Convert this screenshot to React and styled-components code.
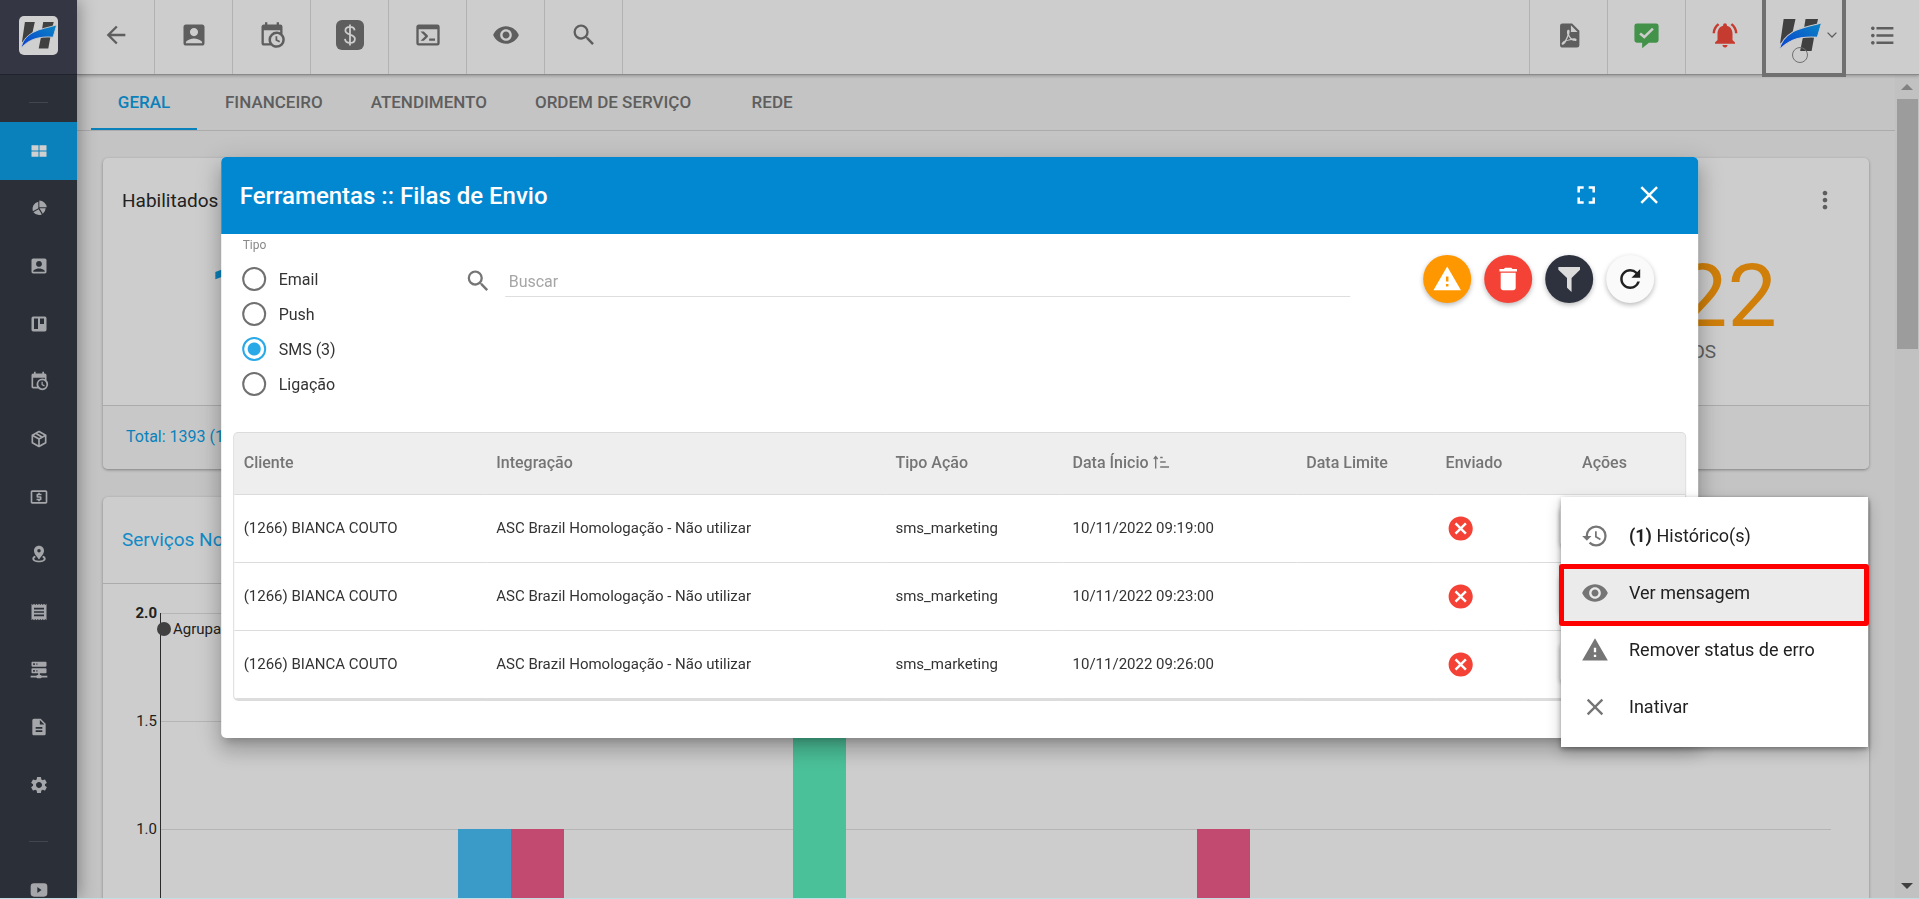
import React from 'react';
import styled, { createGlobalStyle } from 'styled-components';
import {
  MdAccountBox,
  MdArrowBack,
  MdCancel,
  MdClose,
  MdDelete,
  MdDescription,
  MdFormatListBulleted,
  MdFullscreen,
  MdHistory,
  MdLocalAtm,
  MdMoreVert,
  MdNotificationsActive,
  MdReceipt,
  MdRefresh,
  MdSearch,
  MdSettings,
  MdVisibility,
  MdWarning,
} from 'react-icons/md';

const GlobalStyle = createGlobalStyle`
  * {
    box-sizing: border-box;
  }

  html, body, #root {
    height: 100%;
  }

  body {
    margin: 0;
    overflow: hidden;
    background: #c4c4c4;
    color: #212121;
    font-family: Roboto, sans-serif;
    font-size: 16px;
  }

  button, input {
    font: inherit;
    color: inherit;
  }

  button {
    border: 0;
    padding: 0;
    background: none;
    cursor: pointer;
  }

  svg {
    display: block;
    flex: none;
  }
`;

/* ---------- icons ---------- */

const Glyph = ({ d, size = 28 }) => (
  <svg width={size} height={size} viewBox="0 0 24 24" fill="currentColor" fillRule="evenodd">
    <path d={d} />
  </svg>
);

const paths = {
  calendar:
    'M15,13H16.5V15.82L18.94,17.23L18.19,18.53L15,16.69V13M19,8H5V19H9.67C9.24,18.09 9,17.07 9,16A7,7 0 0,1 16,9C17.07,9 18.09,9.24 19,9.67V8M5,21C3.89,21 3,20.1 3,19V5C3,3.89 3.89,3 5,3H6V1H8V3H16V1H18V3H19A2,2 0 0,1 21,5V11.1C22.24,12.36 23,14.09 23,16A7,7 0 0,1 16,23C14.09,23 12.36,22.24 11.1,21H5M16,11.15A4.85,4.85 0 0,0 11.15,16C11.15,18.68 13.32,20.85 16,20.85A4.85,4.85 0 0,0 20.85,16C20.85,13.32 18.68,11.15 16,11.15Z',
  console:
    'M20,19V7H4V19H20M20,3A2,2 0 0,1 22,5V19A2,2 0 0,1 20,21H4A2,2 0 0,1 2,19V5C2,3.89 2.9,3 4,3H20M13,17V15H18V17H13M9.58,13L5.57,9H8.4L11.7,12.3C12.09,12.69 12.09,13.33 11.7,13.72L8.42,17H5.59L9.58,13Z',
  pdf:
    'M14,9H19.5L14,3.5V9M7,2H15L21,8V20A2,2 0 0,1 19,22H7C5.89,22 5,21.1 5,20V4A2,2 0 0,1 7,2M11.93,12.44C12.34,13.34 12.86,14.08 13.46,14.59L13.87,14.91C13,15.07 11.8,15.35 10.53,15.84L10.42,15.88L10.92,14.84C11.37,13.97 11.7,13.18 11.93,12.44M18.41,16.25C18.59,16.07 18.68,15.84 18.69,15.59C18.72,15.39 18.67,15.2 18.57,15.04C18.28,14.57 17.53,14.35 16.29,14.35L15,14.42L14.13,13.84C13.5,13.32 12.93,12.41 12.53,11.28L12.57,11.14C12.9,9.81 13.21,8.2 12.55,7.54C12.39,7.38 12.17,7.3 11.94,7.3H11.7C11.33,7.3 11,7.69 10.91,8.07C10.54,9.4 10.76,10.13 11.13,11.34V11.35C10.88,12.23 10.56,13.25 10.05,14.28L9.09,16.08L8.2,16.57C7,17.32 6.43,18.16 6.32,18.69C6.28,18.88 6.3,19.05 6.37,19.23L6.4,19.28L6.88,19.59L7.32,19.7C8.13,19.7 9.05,18.75 10.29,16.63L10.47,16.56C11.5,16.23 12.78,16 14.5,15.81C15.53,16.32 16.74,16.55 17.5,16.55C17.94,16.55 18.24,16.44 18.41,16.25Z',
  dashboard: 'M3,5H11.4V11.4H3ZM12.6,5H21V11.4H12.6ZM3,12.6H11.4V19H3ZM12.6,12.6H21V19H12.6Z',
  pie:
    'M11.2,4.4V12.2L4.6,16A9,9 0 0,1 11.2,4.4M12.4,3A9.2,9.2 0 0,1 21.3,11H12.4ZM12.6,12.3H20A9,9 0 0,1 16.6,19ZM11.6,13.4L15.4,19.8A9,9 0 0,1 5.3,17Z',
  board:
    'M5,3H19A2,2 0 0,1 21,5V19A2,2 0 0,1 19,21H5A2,2 0 0,1 3,19V5A2,2 0 0,1 5,3M6,5.5V18H10.8V5.5ZM13.2,5.5V12H18V5.5Z',
  box:
    'M21,16.5C21,16.88 20.79,17.21 20.47,17.38L12.57,21.82C12.41,21.94 12.21,22 12,22C11.79,22 11.59,21.94 11.43,21.82L3.53,17.38C3.21,17.21 3,16.88 3,16.5V7.5C3,7.12 3.21,6.79 3.53,6.62L11.43,2.18C11.59,2.06 11.79,2 12,2C12.21,2 12.41,2.06 12.57,2.18L20.47,6.62C20.79,6.79 21,7.12 21,7.5V16.5M12,4.15L10.11,5.22L16,8.61L17.96,7.5L12,4.15M6.04,7.5L12,10.85L13.96,9.75L8.08,6.35L6.04,7.5M5,15.91L11,19.29V12.58L5,9.21V15.91M19,15.91V9.21L13,12.58V19.29L19,15.91Z',
  pin:
    'M12,2C15.6,2 18,4.6 18,8C18,12 14.5,15 12,18.5C9.5,15 6,12 6,8C6,4.6 8.4,2 12,2M12,5.9A2.1,2.1 0 1,0 12,10.1A2.1,2.1 0 1,0 12,5.9M7,14.2L8.2,15.8C7,16.3 6.2,17 6.2,17.8C6.2,19.2 8.6,20.2 12,20.2C15.4,20.2 17.8,19.2 17.8,17.8C17.8,17 17,16.3 15.8,15.8L17,14.2C19,15 20,16.3 20,17.8C20,20.3 16.6,22 12,22C7.4,22 4,20.3 4,17.8C4,16.3 5,15 7,14.2Z',
  server:
    'M13,18H14A1,1 0 0,1 15,19H22V21H15A1,1 0 0,1 14,22H10A1,1 0 0,1 9,21H2V19H9A1,1 0 0,1 10,18H11V16H4A1,1 0 0,1 3,15V11A1,1 0 0,1 4,10H20A1,1 0 0,1 21,11V15A1,1 0 0,1 20,16H13V18M4,2H20A1,1 0 0,1 21,3V7A1,1 0 0,1 20,8H4A1,1 0 0,1 3,7V3A1,1 0 0,1 4,2M9,6H10V4H9V6M9,14H10V12H9V14M5,4V6H7V4H5M5,12V14H7V12H5Z',
  video:
    'M6,4H18A4,4 0 0,1 22,8V16A4,4 0 0,1 18,20H6A4,4 0 0,1 2,16V8A4,4 0 0,1 6,4M10,8.5V15.5L15,12Z',
  message:
    'M4,2H20A2,2 0 0,1 22,4V16A2,2 0 0,1 20,18H14L8.4,22.6V18H4A2,2 0 0,1 2,16V4A2,2 0 0,1 4,2M7.4,9.6L6,11.2L10.2,14.6L18,7L16.6,5.6L10.2,11.8Z',
  funnel: 'M2,1H22V3.5L14.2,11V24L10,20V11L2,3.5Z',
};

const DollarIcon = () => (
  <svg width="28" height="30" viewBox="0 0 28 30">
    <rect width="28" height="30" rx="6" fill="#5e5e5e" />
    <path
      d="M14 4.5V25.5M18.6 10.4C18.4 8 16.7 6.9 14 6.9C11.4 6.9 9.4 8.3 9.4 10.6C9.4 15.8 18.9 13.3 18.9 18.9C18.9 21.4 16.8 22.9 14 22.9C11.2 22.9 9.2 21.5 9 18.9"
      fill="none"
      stroke="#cdcdcd"
      strokeWidth="1.8"
    />
  </svg>
);

const SortIcon = () => (
  <svg width="16" height="14" viewBox="0 0 16 14" fill="none" stroke="currentColor" strokeWidth="1.3">
    <path d="M2.5 13.5V2M0.5 4L2.5 1.5L4.5 4M7 2.5H9.5M7 7H12.5M7 12H16" />
  </svg>
);

const ChevronIcon = () => (
  <svg width="10" height="6" viewBox="0 0 10 6" fill="none" stroke="#5e5e5e" strokeWidth="1.3">
    <path d="M0.6 0.6L5 5L9.4 0.6" />
  </svg>
);

const Logo = ({ width }) => (
  <svg width={width} viewBox="0 0 120 94">
    <defs>
      <linearGradient id="swoosh" x1="0" y1="1" x2="1" y2="0">
        <stop offset="0" stopColor="#0a3fd0" />
        <stop offset="1" stopColor="#0a86c4" />
      </linearGradient>
    </defs>
    <path d="M13 3H46L37 44L3 72ZM74 3H109L104 24L70 28ZM67 52L99 48L91 92H59Z" fill="#404040" />
    <path
      d="M1 90C4 68 16 52 40 38C64 25 88 23 119 13L107 54C60 50 24 62 1 90Z"
      fill="url(#swoosh)"
      stroke="#cdcdcd"
      strokeWidth="3"
    />
  </svg>
);

/* ---------- shell ---------- */

const Shell = styled.div`
  display: grid;
  grid-template-columns: 77px minmax(0, 1fr);
  height: 100vh;
  overflow: hidden;
  border-bottom: 1px solid #c2dce3;
`;

const Sidebar = styled.aside`
  z-index: 2;
  overflow: hidden;
  background: #2b2f38;
  color: #a5a6a9;
  box-shadow: 2px 0 16px rgba(0, 0, 0, 0.35);
`;

const Brand = styled.a`
  display: flex;
  align-items: center;
  justify-content: center;
  height: 75px;
  padding-bottom: 4px;
  background: #343743;
  border-bottom: 1px solid #20232b;
`;

const BrandTile = styled.span`
  display: flex;
  align-items: center;
  justify-content: center;
  width: 39px;
  height: 39px;
  border-radius: 5px;
  background: #d0d0d0;
`;

const SideDivider = styled.div`
  display: flex;
  align-items: center;
  justify-content: center;
  height: 47px;
  padding-top: 8px;

  &::after {
    content: '';
    width: 19px;
    height: 1px;
    background: #43464e;
  }
`;

const SideList = styled.nav`
  display: grid;
  grid-auto-rows: 1fr;
  height: 692px;
`;

const SideLink = styled.a`
  display: flex;
  align-items: center;
  justify-content: center;
  min-height: 57px;
  color: ${(props) => (props.$active ? '#d0d0d0' : 'inherit')};
  background: ${(props) => (props.$active ? '#0a81ba' : 'transparent')};
`;

const Main = styled.div`
  display: flex;
  flex-direction: column;
  min-width: 0;
  min-height: 0;
`;

const TopBar = styled.header`
  z-index: 1;
  display: flex;
  height: 75px;
  background: #cdcdcd;
  border-bottom: 1px solid #8a8a8a;
  box-shadow: 0 1px 3px rgba(0, 0, 0, 0.25);
`;

const BarButton = styled.button`
  display: flex;
  align-items: center;
  justify-content: center;
  width: 78px;
  padding-bottom: 4px;
  border-right: 1px solid #b2b2b2;
  color: ${(props) => props.$color || '#5e5e5e'};
`;

const ListButton = styled(BarButton)`
  width: 73px;
  border-right: 0;
`;

const BarSpacer = styled.div`
  flex: 1;
  border-right: 1px solid #b2b2b2;
`;

const UserButton = styled.button`
  position: relative;
  display: flex;
  align-items: center;
  justify-content: flex-end;
  gap: 5px;
  width: 84px;
  height: 77px;
  margin-left: -2px;
  padding: 0 5px 4px 0;
  border: 4px solid #707070;
  border-top: 0;
`;

const UserStatus = styled.span`
  position: absolute;
  left: 26px;
  top: 47px;
  width: 16px;
  height: 16px;
  border: 1px solid #707070;
  border-radius: 50%;
`;

const Viewport = styled.div`
  display: grid;
  grid-template-columns: minmax(0, 1fr) 24px;
  flex: 1;
  min-height: 0;
  overflow: hidden;
`;

const Page = styled.main`
  min-height: 0;
  overflow: hidden;
`;

const Tabs = styled.nav`
  display: flex;
  height: 56px;
  padding-left: 10px;
  border-bottom: 1px solid #ababab;
`;

const Tab = styled.a`
  position: relative;
  display: flex;
  align-items: center;
  justify-content: center;
  min-width: 114px;
  padding: 0 24px 2px;
  color: ${(props) => (props.$active ? '#0a81ba' : '#5e5e5e')};
  font-size: 17px;
  font-weight: 500;
  text-decoration: none;
  text-transform: uppercase;

  &::after {
    content: '';
    position: absolute;
    left: 4px;
    right: 4px;
    bottom: 0;
    height: 2px;
    background: ${(props) => (props.$active ? '#0a81ba' : 'transparent')};
  }
`;

const Content = styled.div`
  display: flex;
  flex-direction: column;
  gap: 28px;
  padding: 27px 26px 0;
`;

const Card = styled.section`
  border-radius: 5px;
  background: #cdcdcd;
  box-shadow: 0 1px 3px rgba(0, 0, 0, 0.35);
`;

const CardRow = styled.div`
  display: grid;
  grid-template-columns: repeat(4, minmax(0, 1fr));
  gap: 26px;
`;

const CardHead = styled.div`
  display: flex;
  align-items: center;
  justify-content: space-between;
  height: 86px;
  padding: 0 30px 2px 19px;
  color: ${(props) => props.$color || '#212121'};
  font-size: 19px;
`;

const Figure = styled.div`
  height: 161px;
  padding: ${(props) => (props.$end ? '8px 92px 0 0' : '8px 0 0 105px')};
  text-align: ${(props) => (props.$end ? 'right' : 'left')};
  color: ${(props) => props.$color};
  font-size: 88px;
  line-height: 88px;
`;

const FigureLabel = styled.div`
  padding-right: 61px;
  color: #5e5e5e;
  font-size: 19px;
  line-height: 24px;
`;

const CardFoot = styled.div`
  display: flex;
  align-items: center;
  height: 64px;
  padding: 0 23px 2px;
  border-top: 1px solid #ababab;
  border-radius: 0 0 5px 5px;
  background: #c8c8c8;
  color: #0a81ba;
`;

const ChartArea = styled.svg`
  width: 100%;
  border-top: 1px solid #ababab;
  font-size: 15px;
`;

const ScrollTrack = styled.div`
  display: flex;
  flex-direction: column;
  align-items: center;
  justify-content: space-between;
  padding: 9px 1px;
  background: #c1c1c1;
`;

const ScrollThumb = styled.div`
  width: 21px;
  height: 250px;
  margin: 9px 0 auto;
  background: #9c9c9c;
`;

/* ---------- dialog ---------- */

const Dialog = styled.section`
  position: fixed;
  z-index: 5;
  top: 157px;
  left: 50%;
  width: 77%;
  transform: translateX(-50%);
  border-radius: 5px;
  background: #fff;
  box-shadow: 0 7px 8px -4px rgba(0, 0, 0, 0.2),
    0 13px 19px 2px rgba(0, 0, 0, 0.14), 0 5px 24px 4px rgba(0, 0, 0, 0.12);
`;

const DialogHead = styled.header`
  display: flex;
  align-items: center;
  height: 77px;
  padding: 0 34px 0 19px;
  border-radius: 5px 5px 0 0;
  background: #0288d1;
  color: #fff;
`;

const DialogTitle = styled.h2`
  flex: 1;
  margin: 0;
  font-size: 24px;
  font-weight: 500;
`;

const HeadButton = styled.button`
  margin-left: 33px;
  padding-bottom: 2px;
`;

const Filters = styled.div`
  display: flex;
  align-items: flex-start;
  height: 198px;
  padding: 0 44px 0 21px;
`;

const TypeGroup = styled.fieldset`
  width: 222px;
  margin: 0;
  padding: 0;
  border: 0;

  legend {
    padding: 4px 0 15px 1px;
    color: #888;
    font-size: 12px;
    line-height: 14px;
  }
`;

const Radio = styled.label`
  display: flex;
  align-items: center;
  gap: 13px;
  height: 24px;
  margin-bottom: 11px;
  color: #333;

  input {
    appearance: none;
    width: 24px;
    height: 24px;
    margin: 0;
    border: 2px solid #707070;
    border-radius: 50%;
  }

  input:checked {
    border-color: #29a9e8;
    background: radial-gradient(circle, #29a9e8 6px, transparent 7px);
  }
`;

const SearchField = styled.label`
  display: flex;
  flex: 1;
  align-items: center;
  gap: 13px;
  margin-top: 31px;
  color: #757575;

  input {
    flex: 1;
    height: 32px;
    padding: 2px 4px 0;
    border: 0;
    border-bottom: 1px solid #dedede;
    outline: 0;
  }

  input::placeholder {
    color: #a6a6a6;
  }
`;

const Actions = styled.div`
  display: flex;
  gap: 13px;
  margin: 21px 0 0 73px;
`;

const RoundButton = styled.button`
  display: flex;
  align-items: center;
  justify-content: center;
  width: 48px;
  height: 48px;
  border-radius: 50%;
  background: ${(props) => props.$bg};
  color: ${(props) => props.$color || '#fff'};
  box-shadow: 0 2px 5px rgba(0, 0, 0, 0.28);
`;

const TableBox = styled.div`
  margin: 0 12px 37px;
  border: 1px solid #dcdcdc;
  border-bottom-width: 2px;
  border-radius: 5px;
  background: linear-gradient(#eee 61px, #fff 61px);
  overflow: hidden;
`;

const Table = styled.table`
  width: 100%;
  border-collapse: collapse;
  table-layout: fixed;

  th, td {
    padding: 0 9px 2px 10px;
    text-align: left;
    white-space: nowrap;
  }

  tr {
    border-bottom: 1px solid #dcdcdc;
  }

  th {
    height: 61px;
    color: #757575;
    font-weight: 500;
  }

  td {
    height: 68px;
    padding-bottom: 0;
    color: #333;
    font-size: 15px;
  }

  td svg {
    margin-left: 1px;
    color: #f44336;
  }

  th:last-child, td:last-child {
    text-align: center;
  }
`;

const SortLabel = styled.span`
  display: flex;
  align-items: center;
  gap: 5px;
`;

const RowButton = styled.button`
  width: 88px;
  height: 38px;
  border-radius: 3px;
  box-shadow: 0 2px 5px rgba(0, 0, 0, 0.3);
`;

const Menu = styled.div`
  position: fixed;
  z-index: 6;
  top: 497px;
  right: 51px;
  width: 307px;
  padding: 10px 0 12px;
  background: #fff;
  box-shadow: 0 2px 5px rgba(0, 0, 0, 0.35), 0 6px 14px rgba(0, 0, 0, 0.22);
`;

const MenuItem = styled.button`
  position: relative;
  display: flex;
  align-items: center;
  gap: 20px;
  width: 100%;
  height: 57px;
  padding: 0 20px;
  font-size: 18px;
  text-align: left;
  background: ${(props) => (props.$marked ? '#ebebeb' : 'transparent')};

  svg {
    color: #757575;
  }

  &::after {
    content: '';
    display: ${(props) => (props.$marked ? 'block' : 'none')};
    position: absolute;
    inset: 0 -1px -5px -2px;
    border: 5px solid #f00;
    border-radius: 3px;
  }
`;

const sideItems = [
  ['Painel', <Glyph d={paths.dashboard} size={20} />],
  ['Gráficos', <Glyph d={paths.pie} size={20} />],
  ['Clientes', <MdAccountBox size={20} />],
  ['Quadros', <Glyph d={paths.board} size={20} />],
  ['Agenda', <Glyph d={paths.calendar} size={20} />],
  ['Estoque', <Glyph d={paths.box} size={20} />],
  ['Financeiro', <MdLocalAtm size={20} />],
  ['Mapa', <Glyph d={paths.pin} size={20} />],
  ['Notas', <MdReceipt size={20} />],
  ['Rede', <Glyph d={paths.server} size={20} />],
  ['Documentos', <MdDescription size={20} />],
  ['Configurações', <MdSettings size={20} />],
];

const barItems = [
  ['Voltar', <MdArrowBack size={28} />],
  ['Cliente', <MdAccountBox size={28} />],
  ['Agenda', <Glyph d={paths.calendar} />],
  ['Financeiro', <DollarIcon />],
  ['Console', <Glyph d={paths.console} />],
  ['Visualizar', <MdVisibility size={28} />],
  ['Pesquisar', <MdSearch size={28} />],
];

const tabs = ['Geral', 'Financeiro', 'Atendimento', 'Ordem de Serviço', 'Rede'];

const types = ['Email', 'Push', 'SMS (3)', 'Ligação'];

const rows = ['10/11/2022 09:19:00', '10/11/2022 09:23:00', '10/11/2022 09:26:00'];

const ticks = [
  { label: '2.0', y: 29, weight: 700 },
  { label: '1.5', y: 137, weight: 400 },
  { label: '1.0', y: 245, weight: 400 },
];

const bars = [
  { x: 355, y: 245, color: '#3b9bc8' },
  { x: 408, y: 245, color: '#c24a70' },
  { x: 690, y: 29, color: '#4bc199' },
  { x: 1094, y: 245, color: '#c24a70' },
];

const Chart = () => (
  <ChartArea viewBox="0 0 1766 420">
    {ticks.map((tick) => (
      <g key={tick.label}>
        <path d={`M58 ${tick.y + 0.5}H1728`} stroke="#b5b5b5" />
        <text x="54" y={tick.y + 5} textAnchor="end" fontWeight={tick.weight} fill="#212121">
          {tick.label}
        </text>
      </g>
    ))}
    {bars.map((bar) => (
      <rect key={bar.x} x={bar.x} y={bar.y} width="53" height={420 - bar.y} fill={bar.color} />
    ))}
    <path d="M57.5 29V420" stroke="#2a2a2a" />
    <circle cx="61" cy="45" r="7" fill="#404040" />
    <text x="70" y="50" fill="#212121">Agrupado</text>
  </ChartArea>
);

const QueueDialog = () => (
  <Dialog role="dialog" aria-labelledby="queue-title">
    <DialogHead>
      <DialogTitle id="queue-title">Ferramentas :: Filas de Envio</DialogTitle>
      <HeadButton aria-label="Tela cheia"><MdFullscreen size={30} /></HeadButton>
      <HeadButton aria-label="Fechar"><MdClose size={30} /></HeadButton>
    </DialogHead>
    <Filters>
      <TypeGroup>
        <legend>Tipo</legend>
        {types.map((type, i) => (
          <Radio key={type}>
            <input type="radio" name="type" defaultChecked={i === 2} />
            {type}
          </Radio>
        ))}
      </TypeGroup>
      <SearchField>
        <MdSearch size={28} />
        <input type="text" placeholder="Buscar" aria-label="Buscar" />
      </SearchField>
      <Actions>
        <RoundButton $bg="#ff9800" aria-label="Erros"><MdWarning size={30} /></RoundButton>
        <RoundButton $bg="#f44336" aria-label="Excluir"><MdDelete size={30} /></RoundButton>
        <RoundButton $bg="#2d323e" $color="#dcdcdc" aria-label="Filtrar">
          <Glyph d={paths.funnel} size={26} />
        </RoundButton>
        <RoundButton $bg="#fafafa" $color="#212121" aria-label="Atualizar">
          <MdRefresh size={30} />
        </RoundButton>
      </Actions>
    </Filters>
    <TableBox>
      <Table>
        <colgroup>
          <col style={{ width: '17.4%' }} />
          <col style={{ width: '27.5%' }} />
          <col style={{ width: '12.2%' }} />
          <col style={{ width: '16.1%' }} />
          <col style={{ width: '9.6%' }} />
          <col style={{ width: '6%' }} />
          <col />
        </colgroup>
        <thead>
          <tr>
            <th>Cliente</th>
            <th>Integração</th>
            <th>Tipo Ação</th>
            <th><SortLabel>Data Ínicio <SortIcon /></SortLabel></th>
            <th>Data Limite</th>
            <th>Enviado</th>
            <th>Ações</th>
          </tr>
        </thead>
        <tbody>
          {rows.map((date) => (
            <tr key={date}>
              <td>(1266) BIANCA COUTO</td>
              <td>ASC Brazil Homologação - Não utilizar</td>
              <td>sms_marketing</td>
              <td>{date}</td>
              <td />
              <td><MdCancel size={29} /></td>
              <td><RowButton aria-label="Ações" /></td>
            </tr>
          ))}
        </tbody>
      </Table>
    </TableBox>
  </Dialog>
);

const App = () => (
  <>
    <GlobalStyle />
    <Shell>
      <Sidebar>
        <Brand href="#" aria-label="Início">
          <BrandTile><Logo width={36} /></BrandTile>
        </Brand>
        <SideDivider />
        <SideList>
          {sideItems.map(([label, icon], i) => (
            <SideLink key={label} href="#" aria-label={label} $active={i === 0}>
              {icon}
            </SideLink>
          ))}
        </SideList>
        <SideDivider />
        <SideLink href="#" aria-label="Vídeos"><Glyph d={paths.video} size={20} /></SideLink>
      </Sidebar>
      <Main>
        <TopBar>
          {barItems.map(([label, icon]) => (
            <BarButton key={label} aria-label={label}>{icon}</BarButton>
          ))}
          <BarSpacer />
          <BarButton aria-label="PDF"><Glyph d={paths.pdf} size={29} /></BarButton>
          <BarButton $color="#43924a" aria-label="Mensagens"><Glyph d={paths.message} size={29} /></BarButton>
          <BarButton $color="#c63b30" aria-label="Alertas"><MdNotificationsActive size={30} /></BarButton>
          <UserButton aria-label="Usuário">
            <Logo width={43} />
            <ChevronIcon />
            <UserStatus />
          </UserButton>
          <ListButton aria-label="Lista"><MdFormatListBulleted size={29} /></ListButton>
        </TopBar>
        <Viewport>
          <Page>
            <Tabs>
              {tabs.map((tab, i) => (
                <Tab key={tab} href="#" $active={i === 0}>{tab}</Tab>
              ))}
            </Tabs>
            <Content>
              <CardRow>
                <Card>
                  <CardHead>Habilitados</CardHead>
                  <Figure $color="#0a81ba">1</Figure>
                  <CardFoot>Total: 1393 (10</CardFoot>
                </Card>
                <Card />
                <Card />
                <Card>
                  <CardHead $color="#5e5e5e">
                    <span />
                    <MdMoreVert size={28} />
                  </CardHead>
                  <Figure $end $color="#cf7f0a">
                    22
                    <FigureLabel>OS</FigureLabel>
                  </Figure>
                  <CardFoot />
                </Card>
              </CardRow>
              <Card>
                <CardHead $color="#0f8ac6">Serviços No</CardHead>
                <Chart />
              </Card>
            </Content>
          </Page>
          <ScrollTrack>
            <svg width="12" height="6" viewBox="0 0 12 6"><path d="M0 6L6 0L12 6Z" fill="#828282" /></svg>
            <ScrollThumb />
            <svg width="12" height="6" viewBox="0 0 12 6"><path d="M0 0L6 6L12 0Z" fill="#404040" /></svg>
          </ScrollTrack>
        </Viewport>
      </Main>
    </Shell>
    <QueueDialog />
    <Menu role="menu">
      <MenuItem role="menuitem">
        <MdHistory size={28} />
        <span><b>(1)</b> Histórico(s)</span>
      </MenuItem>
      <MenuItem role="menuitem" $marked>
        <MdVisibility size={28} />
        <span>Ver mensagem</span>
      </MenuItem>
      <MenuItem role="menuitem">
        <MdWarning size={28} />
        <span>Remover status de erro</span>
      </MenuItem>
      <MenuItem role="menuitem">
        <MdClose size={28} />
        <span>Inativar</span>
      </MenuItem>
    </Menu>
  </>
);

export default App;
